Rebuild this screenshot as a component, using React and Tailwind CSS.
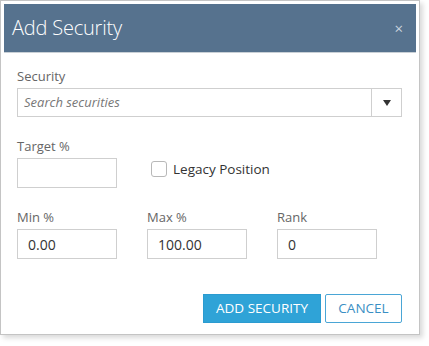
import React, { useState } from 'react';

const font = { fontFamily: '"Segoe UI", "Open Sans", "Noto Sans", sans-serif' };

const Field = ({ label, value, className = '' }) => (
  <div className={`flex flex-col ${className}`}>
    <label className="text-[13px] leading-[16px] text-[#666] mb-[4px]">{label}</label>
    <input
      defaultValue={value}
      className="w-[100px] h-[30px] border border-[#cfcfcf] px-[10px] text-[14px] text-[#333] outline-none"
    />
  </div>
);

export default function App() {
  const [legacy, setLegacy] = useState(false);

  return (
    <div className="w-[429px] h-[346px] bg-white" style={font}>
      <div className="w-[420px] h-[335px] border border-[#c4c4c4] bg-white p-[3px] shadow-[3px_3px_5px_rgba(0,0,0,0.15)] flex flex-col">
        {/* Header */}
        <div className="h-[49px] bg-[#56728e] border-b border-[#c9d0d6] flex items-center justify-between pl-[8px] pr-[13px]">
          <span className="text-[20px] font-light text-white tracking-[-0.2px]">Add Security</span>
          <button className="text-[#c9d3dd] text-[15px] leading-none">×</button>
        </div>

        {/* Body */}
        <div className="px-[13px] pt-[15px] flex flex-col">
          <label className="text-[13px] leading-[16px] text-[#666] mb-[4px]">Security</label>
          <div className="flex h-[29px] w-[385px] border border-[#cfcfcf]">
            <input
              placeholder="Search securities"
              className="flex-1 px-[6px] text-[13px] italic text-[#333] placeholder:text-[#777] outline-none"
            />
            <div className="w-[30px] border-l border-[#cfcfcf] flex items-center justify-center">
              <svg width="8" height="6" viewBox="0 0 8 6"><path d="M0 0h8L4 6z" fill="#333" /></svg>
            </div>
          </div>

          <div className="flex mt-[21px] items-start">
            <Field label="Target %" value="" />
            <label className="flex items-center ml-[34px] mt-[21px] cursor-pointer">
              <input
                type="checkbox"
                checked={legacy}
                onChange={() => setLegacy(!legacy)}
                className="appearance-none w-[16px] h-[16px] border border-[#b8b8b8] rounded-[3px] bg-white"
              />
              <span className="ml-[6px] text-[13.5px] text-[#333]">Legacy Position</span>
            </label>
          </div>

          <div className="flex gap-[30px] mt-[21px]">
            <Field label="Min %" value="0.00" />
            <Field label="Max %" value="100.00" />
            <Field label="Rank" value="0" />
          </div>

          <div className="flex justify-end gap-[4px] mt-[35px] w-[385px]">
            <button className="h-[29px] w-[118px] bg-[#2fa3d7] text-white text-[13.5px] border border-[#2b9bd0]">
              ADD SECURITY
            </button>
            <button className="h-[29px] w-[77px] bg-white text-[#3a8fc4] text-[13.5px] border border-[#4aa6d6] rounded-[2px]">
              CANCEL
            </button>
          </div>
        </div>
      </div>
    </div>
  );
}
